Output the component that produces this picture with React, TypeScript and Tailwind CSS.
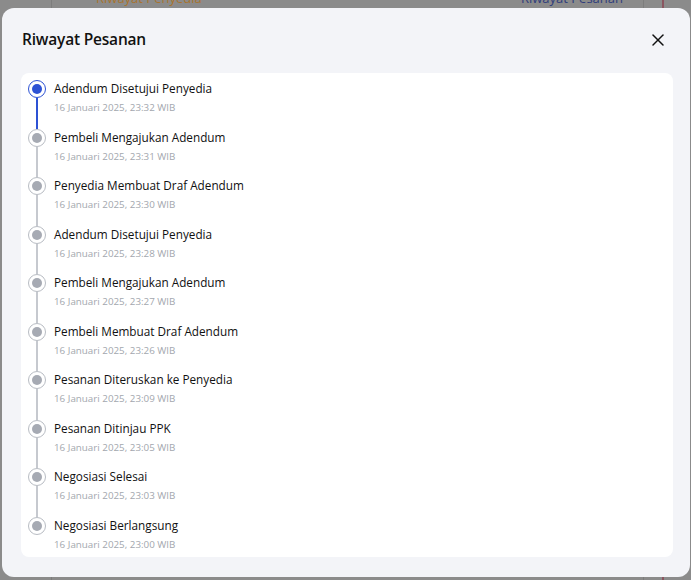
import { X } from 'lucide-react'

interface Entry {
  title: string
  time: string
}

const entries: Entry[] = [
  { title: 'Adendum Disetujui Penyedia', time: '16 Januari 2025, 23:32 WIB' },
  { title: 'Pembeli Mengajukan Adendum', time: '16 Januari 2025, 23:31 WIB' },
  { title: 'Penyedia Membuat Draf Adendum', time: '16 Januari 2025, 23:30 WIB' },
  { title: 'Adendum Disetujui Penyedia', time: '16 Januari 2025, 23:28 WIB' },
  { title: 'Pembeli Mengajukan Adendum', time: '16 Januari 2025, 23:27 WIB' },
  { title: 'Pembeli Membuat Draf Adendum', time: '16 Januari 2025, 23:26 WIB' },
  { title: 'Pesanan Diteruskan ke Penyedia', time: '16 Januari 2025, 23:09 WIB' },
  { title: 'Pesanan Ditinjau PPK', time: '16 Januari 2025, 23:05 WIB' },
  { title: 'Negosiasi Selesai', time: '16 Januari 2025, 23:03 WIB' },
  { title: 'Negosiasi Berlangsung', time: '16 Januari 2025, 23:00 WIB' },
]

function Dot({ active }: { active: boolean }) {
  return (
    <div
      className={`w-[18px] h-[18px] rounded-full border-[1.5px] bg-white flex items-center justify-center shrink-0 ${
        active ? 'border-[#2d52d4]' : 'border-[#b8bcc3]'
      }`}
    >
      <div className={`w-[10px] h-[10px] rounded-full ${active ? 'bg-[#2d52d4]' : 'bg-[#a6aab3]'}`} />
    </div>
  )
}

export default function App() {
  return (
    <div className="relative w-[691px] h-[580px] overflow-hidden bg-[#8b8b8b] font-['Open_Sans',sans-serif]">
      {/* page behind the overlay */}
      <div className="flex h-full">
        <div className="w-[52px] border-r border-[#7d7d7d]" />
        <div className="flex-1 relative">
          <span className="absolute left-[44px] top-[-11px] text-[13px] text-[#a8742f]">Riwayat Penyedia</span>
          <span className="absolute right-[20px] top-[-11px] text-[13px] text-[#2f3d7c]">Riwayat Pesanan</span>
        </div>
        <div className="w-[21px] border-l border-[#7d7d7d] border-r-2 border-r-[#8a5560]" />
        <div className="w-[27px]" />
      </div>

      {/* modal */}
      <div className="absolute left-[2px] top-[8px] w-[688px] h-[569px] rounded-[12px] bg-[#f3f4f8] flex flex-col">
        <div className="h-[65px] flex items-center justify-between pl-[20px] pr-[22px] pb-[1px]">
          <h2 className="text-[15.5px] font-semibold text-[#111] tracking-[-0.2px]">Riwayat Pesanan</h2>
          <X size={20} strokeWidth={1.8} className="text-[#111]" />
        </div>
        <div className="mx-[19px] mr-[17px] bg-white rounded-[8px] h-[484px] pt-[7px] pl-[7px]">
          {entries.map((e, i) => (
            <div key={i} className="flex h-[48.55px]">
              <div className="flex flex-col items-center w-[18px]">
                <Dot active={i === 0} />
                {i < entries.length - 1 && (
                  <div className={`w-[2px] flex-1 ${i === 0 ? 'bg-[#2d52d4]' : 'bg-[#c6c9cf]'}`} />
                )}
              </div>
              <div className="ml-[8px]">
                <p className="text-[11.75px] leading-[16px] text-[#111]">{e.title}</p>
                <p className="mt-[5px] text-[9.8px] leading-[14px] text-[#a3a7ae]">{e.time}</p>
              </div>
            </div>
          ))}
        </div>
      </div>
    </div>
  )
}
